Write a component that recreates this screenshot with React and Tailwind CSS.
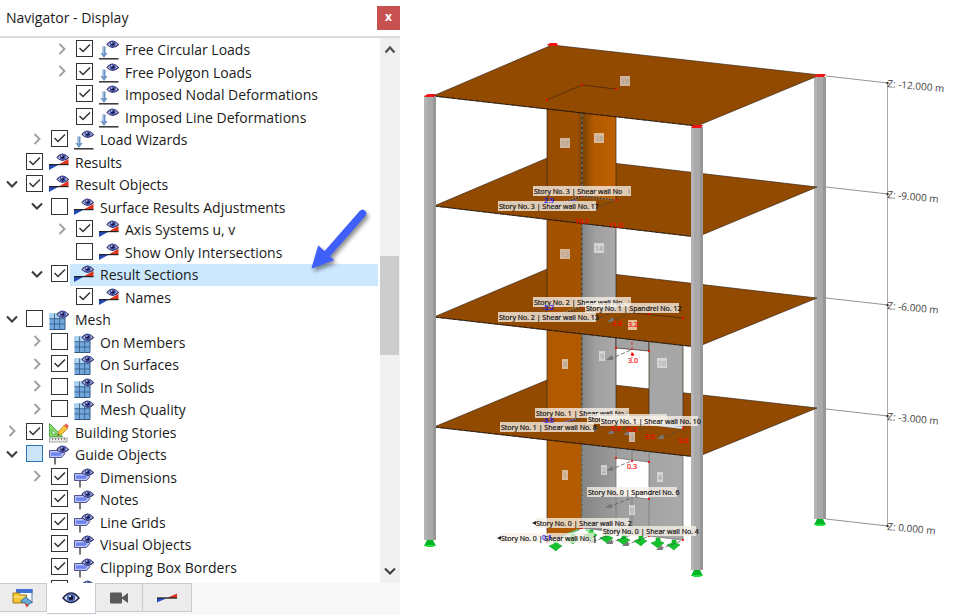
import { useState } from "react"

const TREE = [
  { label: "Free Circular Loads", level: 2, arrow: "right", checked: true, icon: "load" },
  { label: "Free Polygon Loads", level: 2, arrow: "right", checked: true, icon: "load" },
  { label: "Imposed Nodal Deformations", level: 2, checked: true, icon: "load" },
  { label: "Imposed Line Deformations", level: 2, checked: true, icon: "load" },
  { label: "Load Wizards", level: 1, arrow: "right", checked: true, icon: "load" },
  { label: "Results", level: 0, checked: true, icon: "result" },
  { label: "Result Objects", level: 0, arrow: "down", checked: true, icon: "result" },
  { label: "Surface Results Adjustments", level: 1, arrow: "down", icon: "result" },
  { label: "Axis Systems u, v", level: 2, arrow: "right", checked: true, icon: "result" },
  { label: "Show Only Intersections", level: 2, icon: "result" },
  { label: "Result Sections", level: 1, arrow: "down", checked: true, icon: "result", selected: true },
  { label: "Names", level: 2, checked: true, icon: "result" },
  { label: "Mesh", level: 0, arrow: "down", icon: "mesh" },
  { label: "On Members", level: 1, arrow: "right", icon: "mesh" },
  { label: "On Surfaces", level: 1, arrow: "right", checked: true, icon: "mesh" },
  { label: "In Solids", level: 1, arrow: "right", icon: "mesh" },
  { label: "Mesh Quality", level: 1, arrow: "right", icon: "mesh" },
  { label: "Building Stories", level: 0, arrow: "right", checked: true, icon: "stories" },
  { label: "Guide Objects", level: 0, arrow: "down", partial: true, icon: "guide" },
  { label: "Dimensions", level: 1, arrow: "right", checked: true, icon: "guide" },
  { label: "Notes", level: 1, checked: true, icon: "guide" },
  { label: "Line Grids", level: 1, checked: true, icon: "guide" },
  { label: "Visual Objects", level: 1, checked: true, icon: "guide" },
  { label: "Clipping Box Borders", level: 1, checked: true, icon: "guide" },
  { label: "", level: 1, checked: true, icon: "guide" },
]

const INDENT = ["pl-0", "pl-[25px]", "pl-[50px]"]

function Eye() {
  return (
    <g>
      <path d="M8 4.5 Q13.5 -2.5 19.5 4.5 Q13.5 10.5 8 4.5Z" fill="#c3c8ea" stroke="#34346c" strokeWidth="1.1" />
      <circle cx="13.7" cy="4" r="3.1" fill="#4655ac" />
      <circle cx="13.7" cy="4" r="1.6" fill="#14143e" />
      <circle cx="12.8" cy="3" r="0.8" fill="#fff" />
    </g>
  )
}

function TreeIcon({ type }) {
  return (
    <svg viewBox="0 0 20 20" className="size-5 shrink-0" aria-hidden="true">
      {type === "load" && (
        <g>
          <path d="M3.500 6.500h3v6.500h2l-3.500 5-3.500-5h2z" fill="#6b93c4" />
          <path d="M4 7h1v7h-1z" fill="#9dbbdc" />
          <path d="M0 18.800h19.500" stroke="#333" strokeWidth="1.500" />
        </g>
      )}
      {type === "result" && (
        <g>
          <path d="M0 11.500h10L0 17z" fill="#2449b8" />
          <path d="M9.500 11.500L19.500 6v5.500z" fill="#e0331c" />
          <path d="M0 11.600h19.500" stroke="#222" strokeWidth="1.200" />
        </g>
      )}
      {type === "mesh" && (
        <g>
          <rect x="0.500" y="3.500" width="15.500" height="16" fill="#71a7dc" />
          <path d="M0.500 3.500h15v5h-15z" fill="#a9d1f2" />
          <path d="M0.500 8.700h15.500M0.500 14h15.500M5.500 3.500v16M10.700 3.500v16" stroke="#345880" strokeWidth="0.800" />
          <path d="M16 3.500v16H0.500" fill="none" stroke="#345880" />
        </g>
      )}
      {type === "stories" && (
        <g>
          <path d="M0.500 0.500v13h13z" fill="#8fdb70" stroke="#4cae3e" />
          <path d="M3 6.500v4.500h4.500z" fill="#fff" stroke="#4cae3e" />
          <rect x="0.500" y="15" width="17.500" height="4" fill="#e9e9e4" stroke="#a5a5a0" />
          <path d="M3.500 15v2M6.500 15v2M9.500 15v2M12.500 15v2M15.500 15v2" stroke="#888" />
          <path d="M8.500 12.500l1-4L15.500 2l3.500 3-6.500 6.500z" fill="#f8c637" stroke="#a8802c" strokeWidth="0.800" />
          <path d="M15 2.500l2-2 3 2.500-1.800 2.300z" fill="#e5614d" />
          <path d="M8.500 12.500l.5-2 1.500 1.300z" fill="#333" />
        </g>
      )}
      {type === "guide" && (
        <g>
          <path d="M6 12v7.500" stroke="#757575" strokeWidth="2" />
          <path d="M0.500 5.500h12l3.500 3-3.500 4H0.500z" fill="#b9c3f6" stroke="#56568c" />
          <path d="M2 7.500h9.500l1.500 1.200-1.500 2H2z" fill="#6c82f0" />
        </g>
      )}
      {type !== "stories" && <Eye />}
    </svg>
  )
}

function Chevron({ dir }) {
  return (
    <svg viewBox="0 0 12 12" className="size-3" fill="none" aria-hidden="true">
      {dir === "right" && <path d="M3.500 1l5 5-5 5" stroke="#a0a0a0" strokeWidth="1.900" />}
      {dir === "down" && <path d="M1 3.500l5 5 5-5" stroke="#3c3c3c" strokeWidth="2.100" />}
      {dir === "up" && <path d="M1.500 8.500L6 3.500l4.500 5" stroke="#505050" strokeWidth="2.200" />}
    </svg>
  )
}

function TreeRow({ item, id }) {
  const [checked, setChecked] = useState(Boolean(item.checked))

  return (
    <li className={`flex shrink-0 items-center odd:h-[22px] even:h-[23px] ${INDENT[item.level]}`}>
      <div className="flex w-6 shrink-0 justify-center pb-[3px]">
        {item.arrow && (
          <button type="button" aria-label={`Toggle ${item.label}`}>
            <Chevron dir={item.arrow} />
          </button>
        )}
      </div>
      <span className="ml-0.5 grid shrink-0 pb-[3px]">
        <input
          id={id}
          type="checkbox"
          checked={checked}
          onChange={() => setChecked(!checked)}
          aria-label={item.label ? undefined : "More guide objects"}
          className={`peer col-start-1 row-start-1 size-[17px] appearance-none border ${
            item.partial ? "border-[#2f76b5] bg-[#cce4f7]" : "border-[#333] bg-white"
          }`}
        />
        <svg
          viewBox="0 0 17 17"
          className="pointer-events-none invisible col-start-1 row-start-1 size-[17px] peer-checked:visible"
          fill="none"
          aria-hidden="true"
        >
          <path d="M3.500 8l3.500 3.500 7-7" stroke="#333" strokeWidth="1.500" />
        </svg>
      </span>
      <label
        htmlFor={id}
        className={`mr-0.5 ml-[2px] flex h-full min-w-0 flex-1 items-center gap-[6px] pl-1 whitespace-nowrap ${
          item.selected ? "bg-[#cce8ff]" : ""
        }`}
      >
        <TreeIcon type={item.icon} />
        <span>{item.label}</span>
      </label>
    </li>
  )
}

function Navigator() {
  return (
    <aside className="relative flex w-[400px] shrink-0 flex-col bg-white">
      <header className="flex h-[38px] shrink-0 items-center justify-between border-b-2 border-[#d8d8dd] pl-1.5">
        <h1 className="text-sm">Navigator - Display</h1>
        <button type="button" className="h-6 w-[23px] bg-[#c75050] pb-0.5 text-xs leading-none font-bold text-white" aria-label="Close">
          x
        </button>
      </header>

      <div className="flex min-h-0 flex-1">
        <ul className="flex min-w-0 flex-1 flex-col overflow-hidden pt-px text-sm leading-5">
          {TREE.map((item, i) => (
            <TreeRow key={i} id={`item-${i}`} item={item} />
          ))}
        </ul>
        <div className="flex w-5 shrink-0 flex-col items-center bg-[#f0f0f0] py-1">
          <button type="button" aria-label="Scroll up" className="flex h-4 items-center">
            <Chevron dir="up" />
          </button>
          <div className="flex-[199]" />
          <div className="mr-px w-[19px] flex-[100] bg-[#cdcdcd]" />
          <div className="flex-[209]" />
          <button type="button" aria-label="Scroll down" className="flex h-4 items-center">
            <Chevron dir="down" />
          </button>
        </div>
      </div>

      <nav className="flex h-8 shrink-0 items-start bg-[#f8f8f8]">
        <button type="button" aria-label="Data" className="flex h-[29px] w-[47px] items-center justify-center border-y border-r border-[#c9c9d4] bg-[#ececec]">
          <svg viewBox="0 0 22 20" className="h-5 w-[22px]">
            <rect x="4.500" y="1.500" width="15.500" height="12" fill="#f6f8ff" stroke="#6379ae" />
            <path d="M4.500 1h16v4h-16z" fill="#3e70d6" />
            <path d="M1 5h6l1.500 2h6v8H1z" fill="#f6c735" stroke="#a27b1c" />
            <path d="M1.500 9h12" stroke="#fff0a2" />
            <path d="M8.500 13.500l5-4.500 7 5.500-3.500 1-1 2.500-2-2.500z" fill="#68add7" stroke="#3a6e9d" />
            <path d="M13 16h3l-1 4z" fill="#e33a20" />
          </svg>
        </button>
        <button type="button" aria-label="Display" className="flex h-[31px] w-[49px] items-center justify-center border-r border-b border-[#c9c9d4] bg-white">
          <svg viewBox="0 0 18 14" className="h-3.5 w-[18px]">
            <path d="M1 7Q9-3 17 7Q9 16 1 7Z" fill="#d5daf4" stroke="#1d2045" strokeWidth="1.400" />
            <circle cx="9" cy="6.700" r="4.100" fill="#4966b6" />
            <circle cx="9" cy="6.700" r="2.300" fill="#10142f" />
            <circle cx="8" cy="5.200" r="1" fill="#fff" />
          </svg>
        </button>
        <button type="button" aria-label="Views" className="flex h-[29px] w-[47px] items-center justify-center border-y border-r border-[#c9c9d4] bg-[#ececec]">
          <svg viewBox="0 0 18 12" className="h-3 w-[18px]" fill="#595959">
            <rect x="0" y="0.500" width="12" height="11" rx="1" />
            <path d="M11 6l7-5v10z" />
          </svg>
        </button>
        <button type="button" aria-label="Results" className="flex h-[29px] w-[49px] items-center justify-center border-y border-r border-[#c9c9d4] bg-[#ececec]">
          <svg viewBox="0 0 20 10" className="h-2.5 w-5">
            <path d="M0 5h10L0 9.500z" fill="#244ec8" />
            <path d="M10 5l10-4.500V5z" fill="#e0331c" />
            <path d="M0 5h20" stroke="#222" strokeWidth="1.300" />
          </svg>
        </button>
      </nav>

      <svg viewBox="0 0 70 76" className="pointer-events-none absolute top-[204px] left-[304px] h-[76px] w-[70px] drop-shadow-[2px_3px_2px_rgba(0,0,0,0.45)]" aria-hidden="true">
        <path d="M58.500 9.500L23 50" stroke="#3f5ffa" strokeWidth="7.500" strokeLinecap="round" />
        <path d="M8 64L14.500 42l15 14z" fill="#3f5ffa" stroke="#3f5ffa" />
      </svg>
    </aside>
  )
}

// intermediate slabs, lowest first
const SLABS = [
  "434,427 552,378 817,408 697,457",
  "434,317 552,267 817,298 697,347",
  "434,206 552,156 817,187 697,237",
]

const STORY_LABELS = [
  { x: 534, y: 194, w: 98, text: "Story No. 3 | Shear wall No", tail: "I" },
  { x: 499, y: 209, w: 98, text: "Story No. 3 | Shear wall No. 17" },
  { x: 534, y: 305, w: 98, text: "Story No. 2 | Shear wall No.", tail: "I" },
  { x: 586, y: 311, w: 94, text: "Story No. 1 | Spandrel No. 12" },
  { x: 499, y: 320, w: 98, text: "Story No. 2 | Shear wall No. 13" },
  { x: 536, y: 416, w: 94, text: "Story No. 1 | Shear wall No.", tail: "I" },
  { x: 588, y: 422, w: 80, text: "Stor" },
  { x: 601, y: 424, w: 98, text: "Story No. 1 | Shear wall No. 10" },
  { x: 501, y: 430, w: 94, text: "Story No. 1 | Shear wall No. 8" },
  { x: 588, y: 495, w: 90, text: "Story No. 0 | Spandrel No. 6" },
  { x: 536, y: 526, w: 94, text: "Story No. 0 | Shear wall No. 2" },
  { x: 603, y: 534, w: 94, text: "Story No. 0 | Shear wall No. 4" },
  { x: 501, y: 541, w: 94, text: "Story No. 0 | Shear wall No. 1" },
]

const WALL_TAGS = [
  { x: 625, y: 81, text: "19" },
  { x: 565, y: 143, text: "17" },
  { x: 599, y: 138, text: "18" },
  { x: 565, y: 254, text: "13" },
  { x: 599, y: 248, text: "14" },
  { x: 565, y: 364, text: "8" },
  { x: 602, y: 356, text: "9" },
  { x: 662, y: 363, text: "10" },
  { x: 632, y: 437, text: "1" },
  { x: 565, y: 475, text: "1" },
  { x: 604, y: 470, text: "2" },
  { x: 660, y: 477, text: "4" },
  { x: 632, y: 510, text: "6" },
]

const VALUES = [
  { x: 549, y: 203, text: "2.9", fill: "#1414ff" },
  { x: 548, y: 310, text: "-5.2", fill: "#1414ff" },
  { x: 548, y: 423, text: "-3.6", fill: "#1414ff" },
  { x: 547, y: 540, text: "0.1", fill: "#1414ff" },
  { x: 582, y: 224, text: "10.7", fill: "#f00" },
  { x: 616, y: 228, text: "11.0", fill: "#f00" },
  { x: 617, y: 326, text: "3.9", fill: "#f00" },
  { x: 633, y: 327, text: "3.2", fill: "#f00" },
  { x: 633, y: 363, text: "3.0", fill: "#f00" },
  { x: 616, y: 431, text: "0.9", fill: "#f00" },
  { x: 632, y: 432, text: "0.5", fill: "#f00" },
  { x: 650, y: 439, text: "3.0", fill: "#f00" },
  { x: 683, y: 443, text: "3.0", fill: "#f00" },
  { x: 632, y: 469, text: "0.3", fill: "#f00" },
]

const NODES = [
  [547, 100], [582, 85], [616, 89], [547, 210], [582, 196], [616, 200],
  [547, 320], [582, 307], [616, 311], [649, 314], [683, 318],
  [616, 348], [649, 351], [547, 431], [582, 417], [649, 425], [683, 428],
  [616, 458], [649, 462], [632, 461], [616, 495], [649, 499],
  [547, 542], [582, 528], [616, 532], [649, 536], [683, 540],
]

const SUPPORTS = [
  [556, 546], [573, 539], [591, 535], [607, 538], [624, 540], [641, 541], [658, 543], [674, 545],
]

const ELEVATIONS = [
  { y: 83, text: "Z: -12.000 m" },
  { y: 194, text: "Z: -9.000 m" },
  { y: 305, text: "Z: -6.000 m" },
  { y: 416, text: "Z: -3.000 m" },
  { y: 526, text: "Z: 0.000 m" },
]

const ARROWS = [
  [610, 359, 631, 350], [611, 433, 630, 426], [627, 434, 645, 427], [661, 438, 682, 429],
  [610, 470, 631, 461], [609, 507, 631, 498], [593, 542, 614, 533], [610, 543, 631, 535],
  [626, 545, 647, 537], [660, 549, 681, 541], [594, 430, 614, 421], [594, 320, 616, 311],
  [611, 321, 631, 313], [594, 209, 616, 200],
]

function Column({ x, top, bottom }) {
  return (
    <g>
      <rect x={x} y={top} width="12" height={bottom - top} fill="#a9a9a9" />
      <rect x={x} y={top} width="3" height={bottom - top} fill="#b4b4b4" />
      <rect x={x + 9} y={top} width="3" height={bottom - top} fill="#979797" />
      <path d={`M${x + 3} ${bottom}h6l3 6h-12z`} fill="#00b428" />
      <path d={`M${x} ${bottom + 5}h12l-3 2h-6z`} fill="#25df3a" />
    </g>
  )
}

function Model() {
  return (
    <svg viewBox="400 0 565 615" preserveAspectRatio="xMinYMin meet" className="h-full w-full" role="img" aria-label="Building model">
      <defs>
        <linearGradient id="orangeDark">
          <stop offset="0" stopColor="#984c00" />
          <stop offset="0.850" stopColor="#9c4f00" />
          <stop offset="1" stopColor="#824400" />
        </linearGradient>
        <linearGradient id="orange">
          <stop offset="0" stopColor="#784000" />
          <stop offset="0.350" stopColor="#b35a00" />
          <stop offset="1" stopColor="#bd6000" />
        </linearGradient>
        <linearGradient id="grey">
          <stop offset="0" stopColor="#858585" />
          <stop offset="0.400" stopColor="#a0a0a0" />
          <stop offset="1" stopColor="#aaaaaa" />
        </linearGradient>
      </defs>

      <Column x={814} top={77} bottom={519} />

      <g stroke="#3b2a1b" strokeWidth="0.700">
        <polygon points="547,430 582,430 582,528 547,542" fill="#b25b00" />
        <path fillRule="evenodd" d="M582 430H683V540L582 528ZM616 458V495L649 499V462Z" fill="url(#grey)" stroke="#666" />
        <path d="M616 440v18M616 495v37M649 440v22M649 499v37M632 440v20M632 497v33" stroke="#777" />
        <polygon points={SLABS[0]} fill="#924900" />
        <polygon points="547,320 582,320 582,417 547,431" fill="#b15900" />
        <polygon points="582,320 616,320 616,421 582,417" fill="url(#grey)" />
        <polygon points="616,320 649,320 649,351 616,348" fill="#a3a3a3" />
        <polygon points="649,320 683,320 683,428 649,424" fill="#a6a6a6" />
        <polygon points={SLABS[1]} fill="#924900" />
        <polygon points="547,210 582,210 582,307 547,320" fill="#a35200" />
        <polygon points="582,210 616,210 616,311 582,307" fill="url(#grey)" />
        <polygon points={SLABS[2]} fill="#924900" />
        <polygon points="547,100 582,100 582,196 547,210" fill="url(#orangeDark)" />
        <polygon points="582,100 616,100 616,200 582,196" fill="url(#orange)" />
        <polygon points="433,96 552,45 820,75 697,126" fill="#924900" />
      </g>

      {/* slab front edges */}
      <path d="M433 96L697 126M434 206L697 237M434 317L697 347M434 427L697 457" stroke="#20120a" strokeWidth="0.800" strokeDasharray="5 1" />
      <path d="M547 100L582 85L616 89M547 210L582 196M547 320L582 307M547 431L582 417M616 311L683 318" fill="none" stroke="#4b2a0c" strokeWidth="0.800" />
      <path d="M582 114v82M582 225v82M582 335v82M582 446v82" stroke="#6f98a2" strokeWidth="0.900" strokeDasharray="3 2" />
      <path d="M550 208L582 196l34 4M550 318l32-12 34 4M550 429l32-13 101 11" fill="none" stroke="#8fb4c4" strokeOpacity="0.600" strokeWidth="3" strokeDasharray="1 2" />
      <path d="M630 420L649 424L683 428" fill="none" stroke="#cfe3ea" strokeWidth="2" />
      <path d="M547 206l30-6M547 317l30 2M547 427l28-8M549 541l30-11" stroke="#5a5af5" strokeWidth="0.800" />

      <Column x={424} top={96} bottom={540} />
      <Column x={691} top={127} bottom={570} />
      <g fill="#f01414">
        <path d="M424 96l4-2h8l-2 3h-9zM691 127l3-2h9l-2 3h-9zM814 76l4-2h8l-2 3h-9zM547 45l3-2h7l1 3h-9z" />
      </g>

      {SUPPORTS.map(([x, y]) => (
        <path key={x} d={`M${x - 2} ${y - 5}h4v3l4 2-3 2-3 3-4-3-3-2 5-2z`} fill="#13c22c" stroke="#13a326" strokeWidth="0.600" />
      ))}
      <path d="M562 538l9-5M568 534l10-4M586 530l9 4" stroke="#67e96d" strokeWidth="2" strokeDasharray="2 1" />

      {ARROWS.map(([x1, y1, x2, y2]) => (
        <g key={`${x1}-${y1}`}>
          <path d={`M${x1} ${y1}L${x2} ${y2}`} stroke="#444" strokeWidth="0.700" strokeDasharray="4 2" />
          <path d={`M${x1 - 4} ${y1 + 1}l6-5 1 5z`} fill="#777" />
        </g>
      ))}

      {/* wall numbers */}
      {WALL_TAGS.map((tag) => (
        <g key={`${tag.x}-${tag.y}`}>
          <rect
            x={tag.x - (tag.text.length > 1 ? 5 : 3)}
            y={tag.y - 5}
            width={tag.text.length > 1 ? 10 : 6}
            height="10"
            fill="#ededed"
            fillOpacity="0.650"
          />
          <text x={tag.x} y={tag.y + 3} textAnchor="middle" fontSize="7" fill="#9a9a9a">{tag.text}</text>
        </g>
      ))}

      {NODES.map(([x, y]) => (
        <circle key={`${x}-${y}`} cx={x} cy={y} r="1.100" fill="#f00" />
      ))}
      <path d="M632 342v16" stroke="#f00" strokeWidth="0.800" strokeDasharray="3 2" />
      <circle cx="632.500" cy="354.500" r="1.600" fill="#f00" />
      <rect x="628" y="320" width="9" height="10" fill="#e2bf98" />

      {STORY_LABELS.map((item) => (
        <g key={`${item.x}-${item.y}`}>
          <rect x={item.x - 1} y={item.y - 8} width={item.w} height="10" fill="#f5eee6" fillOpacity="0.780" />
          <text x={item.x} y={item.y} fontSize="7" fill="#111" stroke="#111" strokeWidth="0.200">{item.text}</text>
          {item.tail && <text x={item.x + item.w - 4} y={item.y} fontSize="7" fill="#777">{item.tail}</text>}
        </g>
      ))}
      <path d="M532 523l4-2v4zM497 538l4-2v4z" fill="#222" />

      {VALUES.map((value) => (
        <text key={`${value.x}-${value.y}`} x={value.x} y={value.y} textAnchor="middle" fontSize="7" fill={value.fill} stroke={value.fill} strokeWidth="0.200">
          {value.text}
        </text>
      ))}

      {/* elevation scale */}
      <path d="M887.500 83v444" stroke="#aaa" />
      {ELEVATIONS.map((level) => (
        <g key={level.text}>
          <path d={`M826 ${level.y - 7}L888 ${level.y}`} stroke="#777" strokeWidth="0.800" />
          <circle cx="887.500" cy={level.y} r="1.200" fill="#333" />
          <text x="887" y={level.y + 4} fontSize="10" fill="#444" transform={`rotate(5 887 ${level.y + 4})`}>
            {level.text}
          </text>
        </g>
      ))}
    </svg>
  )
}

export default function App() {
  return (
    <div className="flex h-screen overflow-hidden bg-white font-['Open_Sans',sans-serif] text-[#1a1a1a]">
      <Navigator />
      <main className="min-w-0 flex-1">
        <Model />
      </main>
    </div>
  )
}
